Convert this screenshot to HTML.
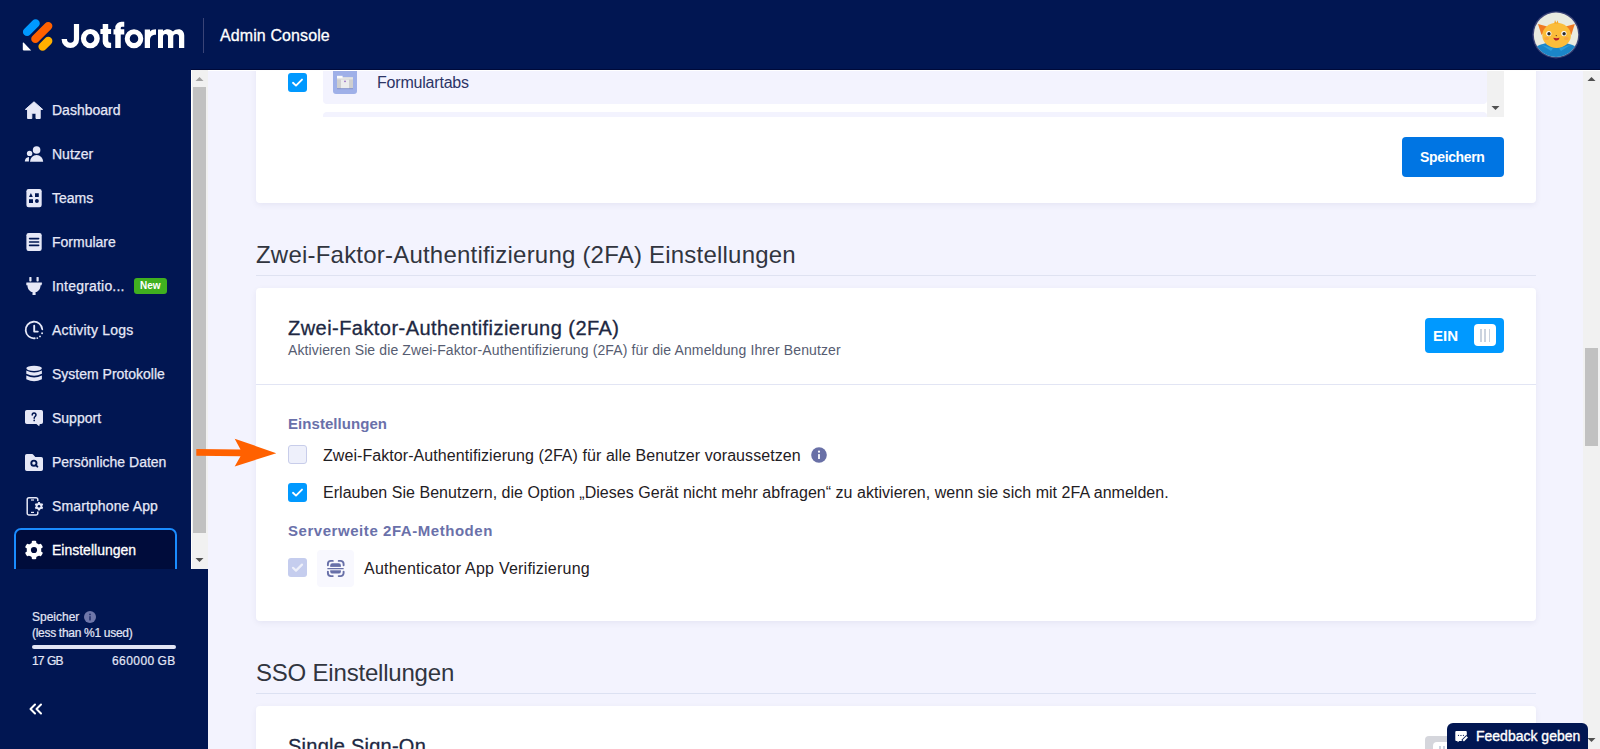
<!DOCTYPE html>
<html><head><meta charset="utf-8">
<style>
*{margin:0;padding:0;box-sizing:border-box}
html,body{width:1600px;height:749px;overflow:hidden;background:#f3f3fe;font-family:"Liberation Sans",sans-serif}
.a{position:absolute}
.t{position:absolute;white-space:nowrap;line-height:1}
#hdr{left:0;top:0;width:1600px;height:70px;background:#011652}
#side{left:0;top:70px;width:208px;height:679px;background:#011652}
.nav{color:#e6e8f7;font-size:14px;-webkit-text-stroke:0.25px #e6e8f7}
.sb{background:#f1f1f1}
.thumb{background:#c1c1c1}
.card{position:absolute;background:#fff;border-radius:4px;box-shadow:0 2px 6px rgba(10,21,81,0.06)}
.cb{position:absolute;width:19px;height:19px;border-radius:3px}
.cbon{background:#0099ff}
.row{color:#1f2024;font-size:16px}
.lbl{color:#6a71aa;font-size:15px;font-weight:bold}
</style></head><body>

<!-- main area -->
<div class="a" style="left:208px;top:70px;width:1375px;height:679px;background:#f3f3fe"></div>

<!-- card 1 (clipped top) -->
<div class="card" style="left:256px;top:40px;width:1280px;height:163px"></div>
<div class="cb cbon" style="left:288px;top:73px"><svg width="19" height="19" viewBox="0 0 19 19"><path d="M5 9.8 L8 12.6 L14 6.6" fill="none" stroke="#fff" stroke-width="1.9" stroke-linecap="round" stroke-linejoin="round"/></svg></div>
<div class="a" style="left:323px;top:60px;width:1164px;height:43.5px;background:#f3f3fe;border-radius:4px"></div>
<div class="a" style="left:323px;top:112px;width:1164px;height:4.5px;background:#f3f3fe;border-radius:4px 4px 0 0"></div>
<div class="a" style="left:333px;top:62px;width:24px;height:32px;background:#9fb0e8;border-radius:3px"></div>
<svg class="a" style="left:336px;top:74px" width="18" height="16" viewBox="336 74 18 16"><rect x="337" y="88" width="16" height="1.2" fill="#8796cf"/><rect x="337" y="77.5" width="16" height="10.6" fill="#cfcfcf"/><rect x="341" y="79.5" width="8" height="8.6" fill="#ececec"/><rect x="337" y="77.2" width="16" height="2.2" fill="#e3e3e3"/><rect x="337" y="75.8" width="5.6" height="2.4" fill="#fbfbfb"/><circle cx="345" cy="81.3" r="0.9" fill="#9a6cc2"/></svg>
<div class="t" style="left:377px;top:75px;font-size:16px;color:#2c3566;letter-spacing:-0.2px">Formulartabs</div>
<div class="a sb" style="left:1487px;top:70px;width:17px;height:46.5px"></div>
<svg class="a" style="left:1491px;top:105px" width="9" height="6"><path d="M0.5 1 L8.5 1 L4.5 5 Z" fill="#505050"/></svg>
<div class="a" style="left:1402px;top:137px;width:102px;height:40px;background:#0075e3;border-radius:4px"></div>
<div class="t" style="left:1420px;top:150px;font-size:14px;font-weight:bold;color:#fff;letter-spacing:-0.35px">Speichern</div>

<!-- section title 2FA -->
<div class="t" style="left:256px;top:243px;font-size:24px;color:#31353f;letter-spacing:0.21px">Zwei-Faktor-Authentifizierung (2FA) Einstellungen</div>
<div class="a" style="left:256px;top:275px;width:1280px;height:1px;background:#dfe2f1"></div>

<!-- card 2 -->
<div class="card" style="left:256px;top:288px;width:1280px;height:333px"></div>
<div class="t" style="left:288px;top:318px;font-size:20px;color:#202842;letter-spacing:0.45px;-webkit-text-stroke:0.3px #202842">Zwei-Faktor-Authentifizierung (2FA)</div>
<div class="t" style="left:288px;top:343px;font-size:14px;color:#565c71;letter-spacing:0.12px">Aktivieren Sie die Zwei-Faktor-Authentifizierung (2FA) für die Anmeldung Ihrer Benutzer</div>
<div class="a" style="left:1425px;top:318px;width:79px;height:35px;background:#0099ff;border-radius:4px"></div>
<div class="t" style="left:1433px;top:328px;font-size:15px;font-weight:bold;color:#fff">EIN</div>
<div class="a" style="left:1474px;top:324px;width:22px;height:22px;background:#fff;border-radius:4px"></div>
<div class="a" style="left:1480px;top:328.5px;width:1.7px;height:13px;background:#cbd3df"></div>
<div class="a" style="left:1484px;top:328.5px;width:1.7px;height:13px;background:#cbd3df"></div>
<div class="a" style="left:1488.6px;top:328.5px;width:1.7px;height:13px;background:#cbd3df"></div>
<div class="a" style="left:256px;top:384px;width:1280px;height:1px;background:#e2e5f4"></div>

<div class="t lbl" style="left:288px;top:416px;letter-spacing:0.05px">Einstellungen</div>
<div class="cb" style="left:288px;top:445px;background:#eef0fb;border:1px solid #c8cdea"></div>
<div class="t row" style="left:323px;top:448px;letter-spacing:0.07px">Zwei-Faktor-Authentifizierung (2FA) für alle Benutzer voraussetzen</div>
<svg class="a" style="left:811px;top:447px" width="16" height="16" viewBox="0 0 16 16"><circle cx="8" cy="8" r="7.8" fill="#6970a6"/><rect x="7.1" y="7" width="1.8" height="5" rx="0.5" fill="#fff"/><circle cx="8" cy="4.7" r="1.1" fill="#fff"/></svg>
<div class="cb cbon" style="left:288px;top:483px"><svg width="19" height="19" viewBox="0 0 19 19"><path d="M5 9.8 L8 12.6 L14 6.6" fill="none" stroke="#fff" stroke-width="1.9" stroke-linecap="round" stroke-linejoin="round"/></svg></div>
<div class="t row" style="left:323px;top:485px;letter-spacing:0.03px">Erlauben Sie Benutzern, die Option „Dieses Gerät nicht mehr abfragen“ zu aktivieren, wenn sie sich mit 2FA anmelden.</div>

<div class="t lbl" style="left:288px;top:523px;letter-spacing:0.55px">Serverweite 2FA-Methoden</div>
<div class="cb" style="left:288px;top:558px;background:#c5cdee"><svg width="19" height="19" viewBox="0 0 19 19"><path d="M5 9.8 L8 12.6 L14 6.6" fill="none" stroke="#fff" stroke-opacity="0.7" stroke-width="2.2" stroke-linecap="round" stroke-linejoin="round"/></svg></div>
<div class="a" style="left:317px;top:550px;width:37px;height:37px;background:#f8f8fe;border-radius:4px"></div>
<svg class="a" style="left:316px;top:549px" width="40" height="40" viewBox="316 549 40 40"><g fill="none" stroke="#6870a8" stroke-width="1.9" stroke-linecap="round"><path d="M327.9 565.3 V563.9 a3 3 0 0 1 3 -3 h1.9"/><path d="M338.7 560.9 h1.9 a3 3 0 0 1 3 3 v1.4"/><path d="M343.6 571.6 v1.5 a3 3 0 0 1 -3 3 h-1.9"/><path d="M332.8 576.1 h-1.9 a3 3 0 0 1 -3 -3 v-1.5"/></g><rect x="330.2" y="563.2" width="10.7" height="10.4" rx="2.2" fill="#6870a8"/><rect x="328" y="566.9" width="15" height="3.4" fill="#f8f8fe"/><rect x="327.2" y="567.95" width="16.6" height="1.4" rx="0.7" fill="#6870a8"/></svg>
<div class="t row" style="left:364px;top:561px;letter-spacing:0.23px">Authenticator App Verifizierung</div>

<!-- SSO section -->
<div class="t" style="left:256px;top:661px;font-size:24px;color:#31353f;letter-spacing:-0.2px">SSO Einstellungen</div>
<div class="a" style="left:256px;top:693px;width:1280px;height:1px;background:#dce1f2"></div>
<div class="card" style="left:256px;top:706px;width:1280px;height:80px"></div>
<div class="t" style="left:288px;top:736px;font-size:20px;color:#202842;letter-spacing:0.25px;-webkit-text-stroke:0.3px #202842">Single Sign-On</div>
<div class="a" style="left:1425px;top:736px;width:79px;height:35px;background:#d5d6dc;border-radius:4px"></div>
<div class="a" style="left:1433px;top:742px;width:22px;height:22px;background:#fff;border-radius:4px"></div>
<div class="a" style="left:1439px;top:746px;width:1.7px;height:13px;background:#cbd3df"></div><div class="a" style="left:1443.2px;top:746px;width:1.7px;height:13px;background:#cbd3df"></div>

<!-- main scrollbar -->
<div class="a sb" style="left:1583px;top:70px;width:17px;height:679px"></div>
<div class="a thumb" style="left:1585px;top:348px;width:13px;height:98px"></div>
<svg class="a" style="left:1587px;top:76px" width="9" height="6"><path d="M0.5 5 L8.5 5 L4.5 1 Z" fill="#505050"/></svg>
<svg class="a" style="left:1587px;top:737px" width="9" height="6"><path d="M0.5 1 L8.5 1 L4.5 5 Z" fill="#505050"/></svg>

<!-- feedback -->
<div class="a" style="left:1447px;top:723px;width:141px;height:30px;background:#011652;border-radius:6px 6px 0 0"></div>
<svg class="a" style="left:1450px;top:726px" width="22" height="20" viewBox="1450 726 22 20"><path d="M1456.3 730.9 H1465.8 a1 1 0 0 1 1 1 V736.6 L1462.2 741 H1459.2 L1457.8 742.2 L1457.4 740.9 H1456.3 a1 1 0 0 1 -1 -1 V731.9 a1 1 0 0 1 1 -1Z" fill="#fff"/><circle cx="1458.5" cy="735.3" r="0.6" fill="#011652"/><rect x="1460.2" y="735" width="1.5" height="0.7" fill="#011652"/><circle cx="1463.4" cy="735.3" r="0.6" fill="#011652"/><path d="M1462.6 741.3 L1467.6 736.3" stroke="#011652" stroke-width="3.6"/><path d="M1463.2 740.7 L1467.2 736.7" stroke="#fff" stroke-width="2"/></svg>
<div class="t" style="left:1476px;top:729px;font-size:14px;color:#fff;letter-spacing:0px;-webkit-text-stroke:0.35px #fff">Feedback geben</div>

<!-- header -->
<div id="hdr" class="a"></div>
<div class="a" style="left:191px;top:69px;width:1409px;height:1px;background:#000a3a"></div>
<div class="a" style="left:191px;top:70px;width:1409px;height:1px;background:#fff"></div>
<svg class="a" style="left:18px;top:14px" width="40" height="40" viewBox="18 14 40 40">
  <path d="M27.1 31.9 L35.6 23.4" stroke="#0099ff" stroke-width="8.4" stroke-linecap="round"/>
  <path d="M35.4 38.9 L48.2 26.1" stroke="#ff6100" stroke-width="8.4" stroke-linecap="round"/>
  <path d="M42.6 46.6 L48.2 41" stroke="#ffb000" stroke-width="8.4" stroke-linecap="round"/>
  <path d="M23.6 42.6 L31.2 50.4 L23.6 50.4 a0.8 0.8 0 0 1 -0.8 -0.8 L22.8 43.4 a0.6 0.6 0 0 1 0.8 -0.8Z" fill="#fff"/>
</svg>
<svg class="a" style="left:55px;top:14px" width="140" height="42" viewBox="55 14 140 42" fill="#fff">
  <path d="M73.9 23.9 H79.1 V39.25 A8.75 8.75 0 0 1 61.6 39.25 V39.1 H67.0 V39.25 A3.45 3.45 0 0 0 73.9 39.25 Z"/>
  <path fill-rule="evenodd" d="M90.35 28.9 a9.45 9.65 0 1 1 0 19.3 a9.45 9.65 0 1 1 0 -19.3Z M90.2 34.1 a4.1 4.55 0 1 0 0 9.1 a4.1 4.55 0 1 0 0 -9.1Z"/>
  <path d="M102.7 23.9 H108.2 V29.1 H111.1 V33.9 H108.2 V40.5 a2.2 2.2 0 0 0 2.2 2.2 H111.1 V48 H109 a6.3 6.3 0 0 1 -6.3 -6.3 V33.9 H100.4 V29.1 H102.7 Z"/>
  <path d="M115.25 48 V34.5 H113.5 V29.25 H115.25 V28 a6.25 6.25 0 0 1 6.25 -6.25 H124.25 V26.75 H122 a1.25 1.25 0 0 0 -1.25 1.25 V29.25 H124.25 V34.5 H120.75 V48 Z"/>
  <path fill-rule="evenodd" d="M134 29.25 a9.25 9.5 0 1 1 0 19 a9.25 9.5 0 1 1 0 -19Z M134 34.25 a4.25 4.4 0 1 0 0 8.8 a4.25 4.4 0 1 0 0 -8.8Z"/>
  <path d="M144.75 48 V29.6 H150 V31.6 C151.2 30 153.2 29.25 156 29.25 V34.75 C152.2 34.75 150 36.6 150 40.2 V48 Z"/>
  <path d="M158 48 V29.6 H163 V31 C164.5 29.8 166 29.25 167.8 29.25 C170 29.25 171.8 30.2 173 31.6 C174.4 30 176.4 29.25 178.5 29.25 C182 29.25 184.25 31.8 184.25 35.5 V48 H179 V36.5 C179 35 178 34 176.2 34 C174.5 34 173.25 35 173.25 36.8 V48 H168 V36.5 C168 35 167 34 165.6 34 C164 34 163 35.2 163 36.8 V48 Z"/>
</svg>
<div class="a" style="left:203px;top:18px;width:1px;height:35px;background:#3a4477"></div>
<div class="t" style="left:220px;top:28px;font-size:16px;color:#fff;letter-spacing:0.1px;-webkit-text-stroke:0.3px #fff">Admin Console</div>
<!-- avatar -->
<svg class="a" style="left:1526px;top:6px" width="60" height="58" viewBox="1526 6 60 58">
  <defs><clipPath id="av"><circle cx="1556" cy="34.8" r="22.2"/></clipPath></defs>
  <circle cx="1556" cy="34.8" r="23.6" fill="#3b4377"/>
  <g clip-path="url(#av)">
    <rect x="1526" y="6" width="60" height="58" fill="#e9ebe0"/>
    <path d="M1535 47 Q1556 37 1577 47 L1580 64 L1532 64 Z" fill="#1b86c8"/>
    <path d="M1541 44.5 L1553 48.5 L1551 51 Z M1571 44.5 L1559 48.5 L1561 51 Z" fill="#2a9fdc"/>
    <path d="M1538 24 L1549 27 L1541.5 35 Z" fill="#f07a22"/>
    <path d="M1574.8 24 L1563.8 27 L1571.3 35 Z" fill="#f07a22"/>
    <ellipse cx="1556.6" cy="35.4" rx="14.3" ry="12.6" fill="#fbbd3a"/>
    <path d="M1554.2 23.5 L1555 20 L1556.4 23 L1557.6 20.3 L1558.5 23.5Z" fill="#f6a623"/>
    <ellipse cx="1546.6" cy="38.6" rx="2.4" ry="1.5" fill="#f9a640"/>
    <ellipse cx="1566.4" cy="38.6" rx="2.4" ry="1.5" fill="#f9a640"/>
    <circle cx="1548.8" cy="33.6" r="2.6" fill="#fff"/><circle cx="1549" cy="33.8" r="1.7" fill="#2b2b2b"/>
    <circle cx="1563.9" cy="33.6" r="2.6" fill="#fff"/><circle cx="1564.1" cy="33.8" r="1.7" fill="#2b2b2b"/>
    <circle cx="1556.3" cy="35.6" r="0.7" fill="#5a3a20"/>
    <path d="M1553.4 37.8 Q1556.5 38.6 1559.6 37.8 Q1559 40.6 1556.5 40.6 Q1554 40.6 1553.4 37.8Z" fill="#b3202a"/>
  </g>
</svg>

<!-- sidebar -->
<div id="side" class="a"></div>
<div class="a sb" style="left:191px;top:70px;width:17px;height:499px"></div>
<div class="a thumb" style="left:193px;top:87px;width:13px;height:446px"></div>
<div class="a" style="left:191px;top:70px;width:1px;height:499px;background:#fff"></div>
<svg class="a" style="left:195px;top:76px" width="9" height="6"><path d="M0.5 5 L8.5 5 L4.5 1 Z" fill="#a3a3a3"/></svg>
<svg class="a" style="left:195px;top:557px" width="9" height="6"><path d="M0.5 1 L8.5 1 L4.5 5 Z" fill="#505050"/></svg>

<!-- active item -->
<div class="a" style="left:14px;top:528px;width:163px;height:50px;border:2px solid #1a8cff;border-radius:7px;background:#000c3b"></div>
<div class="a" style="left:0;top:569px;width:208px;height:180px;background:#011652"></div>

<!-- nav icons -->
<svg class="a" style="left:0;top:70px" width="60" height="500" viewBox="0 70 60 500" fill="#e6e8f7">
  <!-- home -->
  <path d="M34 101.8 L42.6 109.4 L40.2 109.4 L40.2 118.5 L36 118.5 L36 113.2 L31.8 113.2 L31.8 118.5 L27.6 118.5 L27.6 109.4 L25.4 109.4 Z" stroke="#e6e8f7" stroke-width="1" stroke-linejoin="round"/>
  <!-- users -->
  <circle cx="36.6" cy="150" r="3.8"/>
  <path d="M30 161.8 a6.6 6.8 0 0 1 13.2 0 Z"/>
  <circle cx="29.6" cy="153.4" r="2.7"/>
  <path d="M24.8 161.6 a4.8 4.8 0 0 1 4.2 -4.5 L28.9 161.6Z"/>
  <!-- teams -->
  <rect x="26.4" y="189" width="15.3" height="18.2" rx="2.2"/>
  <path d="M29 197 L30.9 193 L32.8 197Z M35 193.2 h3.8 v3.7 h-3.8Z M29 199.2 h4 v3.7 h-4Z" fill="#011652"/>
  <circle cx="36.9" cy="201" r="1.95" fill="#011652"/>
  <!-- formulare -->
  <rect x="26.4" y="233" width="15.3" height="18" rx="2.2"/>
  <path d="M29.6 238.6 h9 M29.6 242 h9 M29.6 245.4 h9" stroke="#011652" stroke-width="1.6" stroke-linecap="round"/>
  <!-- plug -->
  <rect x="29.3" y="276.9" width="2.2" height="4.6" rx="0.7"/>
  <rect x="36.5" y="276.9" width="2.2" height="4.6" rx="0.7"/>
  <path d="M26.6 282.6 H41.4 a0.6 0.6 0 0 1 0.3 1.2 V285.2 H40.6 C40.4 289.4 38.2 291.6 35.6 292.1 V295 H32.5 V292.1 C29.9 291.6 27.6 289.4 27.4 285.2 H26.3 V283.2 a0.6 0.6 0 0 1 0.3 -0.6Z"/>
  <!-- clock -->
  <path d="M34.72 338.27 A8.3 8.3 0 1 1 42.27 329.28" fill="none" stroke="#e6e8f7" stroke-width="1.8" stroke-linecap="round"/>
  <circle cx="42.1" cy="333.2" r="0.95"/><circle cx="40" cy="336.4" r="0.95"/><circle cx="37.3" cy="338.1" r="0.95"/>
  <path d="M34.2 325.8 V331.6 H37.8" fill="none" stroke="#e6e8f7" stroke-width="1.9" stroke-linecap="round" stroke-linejoin="round"/>
  <!-- database -->
  <ellipse cx="34.1" cy="368.3" rx="7.8" ry="2.6"/>
  <path d="M26.3 370.6 q7.8 3.8 15.6 0 v3.2 q-7.8 3.8 -15.6 0Z"/>
  <path d="M26.3 375.6 q7.8 3.8 15.6 0 v3.6 q-7.8 4 -15.6 0Z"/>
  <!-- support -->
  <path d="M26.8 410 h14.4 a1.8 1.8 0 0 1 1.8 1.8 v10.4 a1.8 1.8 0 0 1 -1.8 1.8 h-1.4 l-0.6 2.2 l-2.8 -2.2 h-9.6 a1.8 1.8 0 0 1 -1.8 -1.8 v-10.4 a1.8 1.8 0 0 1 1.8 -1.8Z"/>
  <path d="M32.2 414.9 a1.9 1.9 0 1 1 2.9 1.6 c-0.6 0.4 -0.9 0.7 -0.9 1.4 v0.3" fill="none" stroke="#011652" stroke-width="1.5" stroke-linecap="round"/>
  <circle cx="34.2" cy="420.4" r="0.85" fill="#011652"/>
  <!-- folder search -->
  <path d="M26.8 454 h5.4 a1.2 1.2 0 0 1 0.9 0.4 l2.2 2.6 h5.9 a1.8 1.8 0 0 1 1.8 1.8 v10.4 a1.8 1.8 0 0 1 -1.8 1.8 h-14.4 a1.8 1.8 0 0 1 -1.8 -1.8 v-13.4 a1.8 1.8 0 0 1 1.8 -1.8Z"/>
  <circle cx="33.9" cy="463.2" r="2.6" fill="none" stroke="#011652" stroke-width="1.9"/>
  <path d="M35.8 465.1 L37.4 466.7" stroke="#011652" stroke-width="1.9" stroke-linecap="round"/>
  <!-- smartphone -->
  <path d="M29 497.8 h7 a1.8 1.8 0 0 1 1.8 1.8 v1.6 M37.8 511.6 v1.6 a1.8 1.8 0 0 1 -1.8 1.8 h-7 a1.8 1.8 0 0 1 -1.8 -1.8 v-13.6 a1.8 1.8 0 0 1 1.8 -1.8" fill="none" stroke="#e6e8f7" stroke-width="1.5"/>
  <path d="M31 500 h3" stroke="#e6e8f7" stroke-width="1.2"/>
  <path d="M31 512.4 h3" stroke="#e6e8f7" stroke-width="1.2"/>
  <g transform="translate(39 506.2)"><circle r="4.6" fill="#011652"/><circle r="3.3"/><rect x="-1.05" y="-4.3" width="2.1" height="2" rx="0.4" transform="rotate(0)"/><rect x="-1.05" y="-4.3" width="2.1" height="2" rx="0.4" transform="rotate(60)"/><rect x="-1.05" y="-4.3" width="2.1" height="2" rx="0.4" transform="rotate(120)"/><rect x="-1.05" y="-4.3" width="2.1" height="2" rx="0.4" transform="rotate(180)"/><rect x="-1.05" y="-4.3" width="2.1" height="2" rx="0.4" transform="rotate(240)"/><rect x="-1.05" y="-4.3" width="2.1" height="2" rx="0.4" transform="rotate(300)"/><circle r="1.3" fill="#011652"/></g>
</svg>
<!-- gear -->
<svg class="a" style="left:24px;top:540px" width="20" height="20" viewBox="0 0 20 20">
  <g transform="translate(10 10)" fill="#fff">
    <circle r="7.3"/>
    <rect x="-2.3" y="-9.2" width="4.6" height="4" rx="1.2" transform="rotate(0)"/>
    <rect x="-2.3" y="-9.2" width="4.6" height="4" rx="1.2" transform="rotate(60)"/>
    <rect x="-2.3" y="-9.2" width="4.6" height="4" rx="1.2" transform="rotate(120)"/>
    <rect x="-2.3" y="-9.2" width="4.6" height="4" rx="1.2" transform="rotate(180)"/>
    <rect x="-2.3" y="-9.2" width="4.6" height="4" rx="1.2" transform="rotate(240)"/>
    <rect x="-2.3" y="-9.2" width="4.6" height="4" rx="1.2" transform="rotate(300)"/>
    <circle r="3.1" fill="#000c3b"/>
  </g>
</svg>

<div class="t nav" style="left:52px;top:103px">Dashboard</div>
<div class="t nav" style="left:52px;top:147px">Nutzer</div>
<div class="t nav" style="left:52px;top:191px">Teams</div>
<div class="t nav" style="left:52px;top:235px">Formulare</div>
<div class="t nav" style="left:52px;top:279px;letter-spacing:0.2px">Integratio...</div>
<div class="a" style="left:134px;top:278px;width:33px;height:16px;background:#40b01f;border-radius:3px"></div>
<div class="t" style="left:140px;top:281px;font-size:10px;font-weight:bold;color:#fff">New</div>
<div class="t nav" style="left:52px;top:323px;letter-spacing:0.22px">Activity Logs</div>
<div class="t nav" style="left:52px;top:367px">System Protokolle</div>
<div class="t nav" style="left:52px;top:411px">Support</div>
<div class="t nav" style="left:52px;top:455px">Persönliche Daten</div>
<div class="t nav" style="left:52px;top:499px;letter-spacing:0.12px">Smartphone App</div>
<div class="t nav" style="left:52px;top:543px;color:#fff;-webkit-text-stroke:0.3px #fff">Einstellungen</div>

<!-- storage -->
<div class="t" style="left:32px;top:611px;font-size:12px;color:#e3e6f6;-webkit-text-stroke:0.2px #e3e6f6">Speicher</div>
<svg class="a" style="left:84px;top:611px" width="12" height="12" viewBox="0 0 12 12"><circle cx="6" cy="6" r="6" fill="#6f77aa"/><rect x="5.3" y="5.2" width="1.4" height="4.2" fill="#1c2a66"/><circle cx="6" cy="3.4" r="0.85" fill="#1c2a66"/></svg>
<div class="t" style="left:32px;top:627px;font-size:12px;color:#e3e6f6;letter-spacing:-0.3px;-webkit-text-stroke:0.2px #e3e6f6">(less than %1 used)</div>
<div class="a" style="left:32px;top:645px;width:144px;height:4px;background:#e2e5f6;border-radius:2px"></div>
<div class="t" style="left:32px;top:655px;font-size:12px;color:#e3e6f6;letter-spacing:-0.8px;word-spacing:0.6px;-webkit-text-stroke:0.2px #e3e6f6">17 GB</div>
<div class="t" style="left:112px;top:655px;font-size:12px;color:#e3e6f6;letter-spacing:0.45px;word-spacing:-1px;-webkit-text-stroke:0.2px #e3e6f6">660000 GB</div>
<svg class="a" style="left:28px;top:702px" width="16" height="14" viewBox="0 0 16 14"><path d="M7 2.5 L2.5 7 L7 11.5 M13 2.5 L8.5 7 L13 11.5" fill="none" stroke="#fff" stroke-width="2" stroke-linecap="round" stroke-linejoin="round"/></svg>

<!-- orange arrow -->
<svg class="a" style="left:190px;top:430px" width="100" height="50" viewBox="190 430 100 50"><path d="M196.3 449 L240.5 449.4 L234.7 438.7 L276.3 453.2 L234.7 466.4 L240.5 456.2 L196.3 455.7 Z" fill="#ff6100"/></svg>

</body></html>
